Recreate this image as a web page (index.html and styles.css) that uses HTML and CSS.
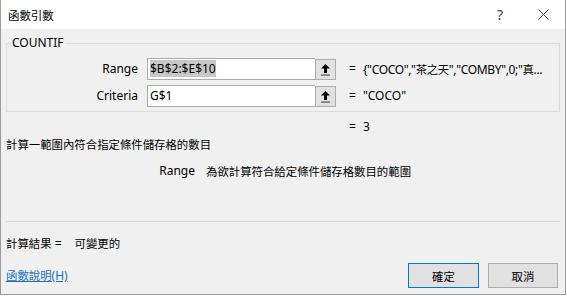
FILE: index.html
```html
<!DOCTYPE html>
<html>
<head>
<meta charset="utf-8">
<link rel="stylesheet" href="styles.css">
</head>
<body>
  <div class="dialog">
    <div class="titlebar">
      <span class="title zh">函數引數</span>
      <span class="help">?</span>
      <span class="close">
        <svg width="11" height="11" viewBox="0 0 11 11"><path d="M0.5 0.5 L10.5 10.5 M10.5 0.5 L0.5 10.5" stroke="#3c3c3c" stroke-width="1" fill="none"/></svg>
      </span>
    </div>
    <div class="body">
      <fieldset class="group">
        <legend>COUNTIF</legend>
        <div class="arg">
          <span class="arg-name">Range</span>
          <div class="arg-box"><span class="sel">$B$2:$E$10</span></div>
          <span class="ref-btn">
            <svg width="9" height="12" viewBox="0 0 9 12"><path d="M4.5 0 L9 4.5 H6 V9 H3 V4.5 H0 Z" fill="#000"/><rect x="0" y="10.5" width="9" height="1.2" fill="#555"/></svg>
          </span>
          <span class="eq">=</span>
          <span class="arg-val long">{"COCO","<span class="zh">茶之天</span>","COMBY",0;"<span class="zh">真</span>...</span>
        </div>
        <div class="arg">
          <span class="arg-name">Criteria</span>
          <div class="arg-box">G$1</div>
          <span class="ref-btn">
            <svg width="9" height="12" viewBox="0 0 9 12"><path d="M4.5 0 L9 4.5 H6 V9 H3 V4.5 H0 Z" fill="#000"/><rect x="0" y="10.5" width="9" height="1.2" fill="#555"/></svg>
          </span>
          <span class="eq">=</span>
          <span class="arg-val">"COCO"</span>
        </div>
      </fieldset>

      <div class="result-line"><span class="eq">=</span><span class="arg-val">3</span></div>
      <div class="desc zh">計算一範圍內符合指定條件儲存格的數目</div>
      <div class="hint">
        <span class="hint-name">Range</span>
        <span class="hint-text zh">為欲計算符合給定條件儲存格數目的範圍</span>
      </div>

      <div class="sep"></div>

      <div class="calc"><span class="zh">計算結果</span> =<span class="calc-val zh">可變更的</span></div>

      <div class="footer">
        <a class="help-link" href="#"><span class="zh">函數說明</span>(H)</a>
        <button class="btn ok zh">確定</button>
        <button class="btn zh">取消</button>
      </div>
    </div>
  </div>
</body>
</html>
```

FILE: styles.css
```css
body {
  margin: 0;
  background: #ffffff;
  font-family: "Noto Sans", "Noto Sans CJK TC", sans-serif;
  font-size: 12px;
  line-height: 16px;
  color: #000;
}
.zh {
  font-family: "Noto Sans CJK TC", sans-serif;
  font-size: 11.4px;
}
.dialog {
  width: 566px;
  height: 295px;
  box-sizing: border-box;
  border: 1px solid #9a9a9a;
  border-top: none;
  background: #f0f0f0;
  display: flex;
  flex-direction: column;
}

/* title bar */
.titlebar {
  height: 29px;
  background: #ffffff;
  display: flex;
  align-items: center;
  padding-left: 7px;
}
.title {
  flex: 1;
  padding-top: 1px;
}
.help {
  width: 30px;
  margin-right: 6px;
  text-align: center;
  font-size: 14px;
  color: #444;
}
.close {
  width: 44px;
  display: flex;
  justify-content: center;
  align-items: center;
}
.close svg {
  display: block;
}

/* body */
.body {
  flex: 1;
  padding: 0 5px;
  display: flex;
  flex-direction: column;
}
.group {
  margin: 6px 0 0 0;
  padding: 7px 0 4px 0;
  border: 1px solid #dcdcdc;
  display: flex;
  flex-direction: column;
  gap: 5px;
}
.group legend {
  margin-left: 4px;
  padding: 0 1px;
  line-height: 16px;
}
.arg {
  display: flex;
  align-items: center;
  height: 22px;
}
.arg-name {
  width: 131px;
  margin-right: 9px;
  text-align: right;
}
.arg-box {
  width: 168px;
  height: 22px;
  box-sizing: border-box;
  border: 1px solid #ababab;
  border-right: none;
  background: #ffffff;
  padding: 2px 2px;
  white-space: nowrap;
}
.sel {
  background: #c8c8c8;
}
.ref-btn {
  width: 21px;
  height: 21px;
  box-sizing: border-box;
  border: 1px solid #adadad;
  background: #e1e1e1;
  display: flex;
  justify-content: center;
  align-items: center;
  margin-top: 1px;
}
.ref-btn svg {
  display: block;
}
.eq {
  margin-left: 13px;
  margin-right: 7px;
}
.arg-val {
  white-space: nowrap;
}
.arg-val.long {
  letter-spacing: -0.35px;
}
.result-line {
  margin-top: 7px;
  padding-left: 330px;
}
.desc {
  margin-top: 1px;
}
.hint {
  margin-top: 11px;
  display: flex;
}
.hint-name {
  width: 189px;
  text-align: right;
  margin-right: 11px;
}
.sep {
  margin-top: 42px;
  height: 1px;
  background: #dadada;
}
.calc {
  margin-top: 13px;
}
.calc-val {
  margin-left: 13px;
}
.footer {
  margin-top: 11px;
  display: flex;
  align-items: center;
  padding-right: 2px;
}
.help-link {
  flex: 1;
  color: #1f6fc5;
  text-decoration: underline;
}
.btn {
  height: 25px;
  width: 70px;
  margin-left: 9px;
  border: 1px solid #adadad;
  background: #e1e1e1;
  color: #000;
  padding: 0;
}
.btn.ok {
  width: 71px;
  border: 1px solid #0078d7;
}
```
